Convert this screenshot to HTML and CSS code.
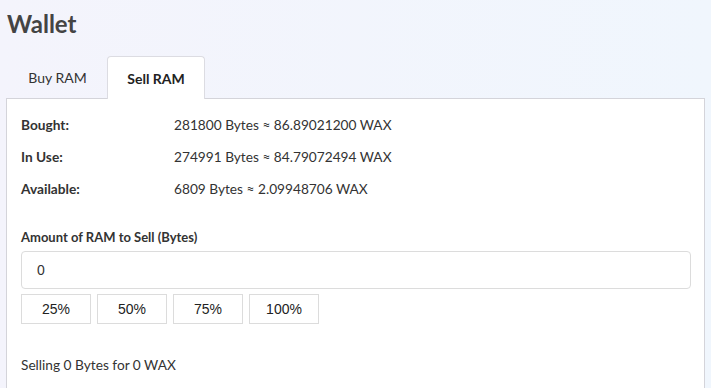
FILE: index.html
```html
<!DOCTYPE html>
<html lang="en">
<head>
    <meta charset="utf-8" />
    <meta name="viewport" content="width=device-width, initial-scale=1.0">
    <link rel="stylesheet" href="styles.css">
    <title>Wallet</title>
</head>
<body>
    <div class="wallet">
        <h1>Wallet</h1>

        <div class="tabs">
            <div class="tab">Buy RAM</div>
            <div class="tab active">Sell RAM</div>
        </div>

        <div class="panel">
            <div class="stats">
                <div class="stat-label">Bought:</div>
                <div class="stat-value">281800 Bytes ≈ 86.89021200 WAX</div>
                <div class="stat-label">In Use:</div>
                <div class="stat-value">274991 Bytes ≈ 84.79072494 WAX</div>
                <div class="stat-label">Available:</div>
                <div class="stat-value">6809 Bytes ≈ 2.09948706 WAX</div>
            </div>

            <label class="amount-label" for="amount">Amount of RAM to Sell (Bytes)</label>
            <input class="amount-input" type="text" id="amount" value="0">

            <div class="percent-buttons">
                <button class="percent">25%</button>
                <button class="percent">50%</button>
                <button class="percent">75%</button>
                <button class="percent">100%</button>
            </div>

            <p class="summary">Selling 0 Bytes for 0 WAX</p>
        </div>
    </div>
</body>
</html>
```

FILE: styles.css
```css
body {
    margin: 0;
    height: 100vh;
    background: linear-gradient(to right, #f4f4fc, #f0f6fd);
    font-family: 'Lato', sans-serif;
    color: #333;
    overflow: hidden;
}

.wallet {
    padding: 0 6px;
}

h1 {
    font-size: 24px;
    line-height: 32px;
    font-weight: bold;
    color: #444;
    margin: 8px 0 0 1px;
}

.tabs {
    display: flex;
    margin-top: 16px;
    padding-left: 2px;
}

.tab {
    box-sizing: border-box;
    width: 99px;
    height: 42px;
    display: flex;
    align-items: center;
    justify-content: center;
    font-size: 14px;
    color: #333;
    border: 1px solid transparent;
    border-bottom: none;
}

.tab.active {
    width: 98px;
    background-color: white;
    border-color: #dcdce2;
    border-radius: 4px 4px 0 0;
    font-weight: bold;
    color: #222;
    margin-bottom: -1px;
    height: 43px;
    position: relative;
    z-index: 1;
}

.panel {
    background-color: white;
    border: 1px solid #d4d4da;
    padding: 9px 14px 14px;
    height: 290px;
}

.stats {
    display: grid;
    grid-template-columns: 153px 1fr;
    grid-auto-rows: 32px;
    align-items: center;
    font-size: 13.7px;
}

.stat-label {
    font-weight: bold;
    color: #333;
}

.amount-label {
    display: block;
    margin-top: 24px;
    line-height: 18px;
    font-size: 13px;
    font-weight: bold;
    color: #333;
}

.amount-input {
    display: block;
    box-sizing: border-box;
    width: 670px;
    height: 38px;
    margin-top: 5px;
    padding: 0 15px;
    border: 1px solid #dcdcdc;
    border-radius: 4px;
    font-family: 'Liberation Sans', Arial, sans-serif;
    font-size: 14px;
    color: #333;
}

.percent-buttons {
    display: flex;
    gap: 6px;
    margin-top: 5px;
}

.percent {
    width: 70px;
    height: 30px;
    background-color: white;
    border: 1px solid #dcdcdc;
    font-family: 'Liberation Sans', Arial, sans-serif;
    font-size: 14px;
    color: #222;
    cursor: pointer;
}

.summary {
    margin: 32px 0 0;
    line-height: 18px;
    font-size: 13.7px;
    color: #333;
}
```
